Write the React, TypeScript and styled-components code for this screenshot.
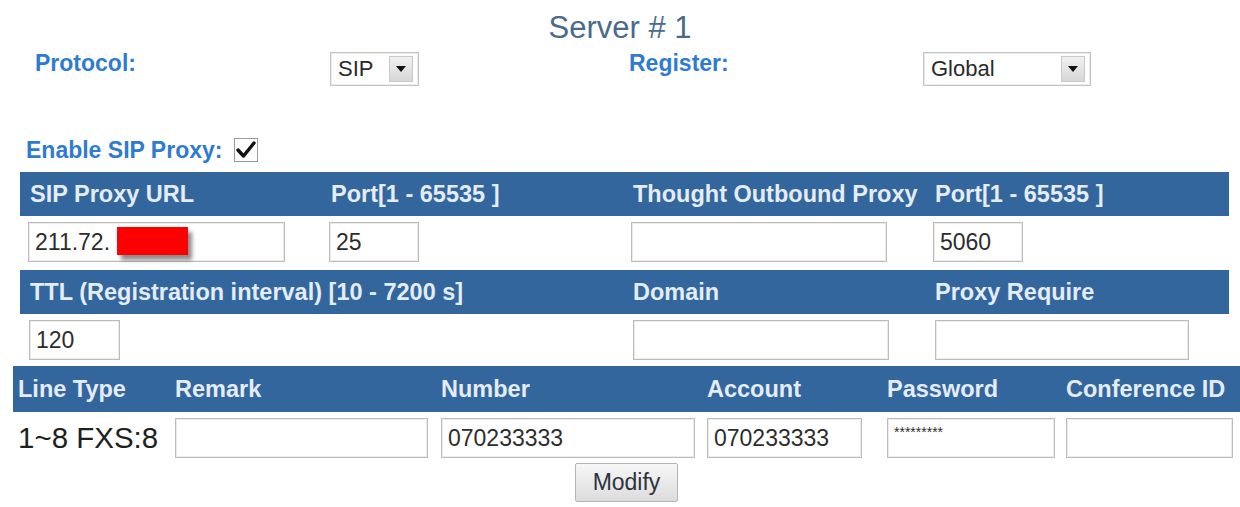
import React from "react";
import styled, { createGlobalStyle } from "styled-components";

const GlobalStyle = createGlobalStyle`
  body {
    margin: 0;
    background: #ffffff;
    font-family: "Liberation Sans", Arial, sans-serif;
  }
`;

const Page = styled.div`
  width: 1240px;
  height: 507px;
  overflow: hidden;
  position: relative;
`;

const Title = styled.h1`
  margin: 0;
  padding-top: 8px;
  height: 40px;
  line-height: 40px;
  text-align: center;
  font-size: 31px;
  font-weight: normal;
  color: #4a6a8c;
`;

const TopRow = styled.div`
  display: grid;
  grid-template-columns: 295px 299px 294px 1fr;
  padding: 4px 0 0 35px;
  height: 36px;
`;

const Label = styled.span`
  font-size: 23px;
  font-weight: bold;
  line-height: 22px;
  color: #2f7bd2;
`;

const SelectBox = styled.div<{ $w: number }>`
  width: ${(p) => p.$w}px;
  height: 34px;
  box-sizing: border-box;
  border: 1px solid #c4c4c4;
  box-shadow: inset 0 0 0 1px #ececec;
  display: flex;
  align-items: center;
  justify-content: space-between;
  padding: 0 5px 0 7px;
  font-size: 22px;
  color: #2a2a2a;
`;

const ArrowButton = styled.span`
  width: 24px;
  height: 26px;
  box-sizing: border-box;
  border: 1px solid #c9c9c9;
  background: linear-gradient(#f2f2f2, #d6d6d6);
  display: flex;
  align-items: center;
  justify-content: center;

  &::after {
    content: "";
    border-left: 5px solid transparent;
    border-right: 5px solid transparent;
    border-top: 6px solid #111;
  }
`;

const EnableRow = styled.div`
  display: flex;
  align-items: center;
  gap: 12px;
  margin-top: 49px;
  padding-left: 26px;
  height: 26px;
`;

const CheckBox = styled.span`
  width: 24px;
  height: 24px;
  box-sizing: border-box;
  border: 1px solid #9a9a9a;
  background: #fff;
  display: flex;
  align-items: center;
  justify-content: center;
`;

const Section = styled.div<{ $left: number }>`
  margin-left: ${(p) => p.$left}px;
`;

const ProxyBlock = styled(Section)`
  margin-top: 9px;
  width: 1209px;
`;

const HeaderBar = styled.div<{ $cols: string; $h: number }>`
  display: grid;
  grid-template-columns: ${(p) => p.$cols};
  align-items: center;
  height: ${(p) => p.$h}px;
  background: #33669c;
  color: #e4ecf5;
  font-size: 23.5px;
  font-weight: bold;
  white-space: nowrap;
`;

const FieldRow = styled.div<{ $cols: string; $pb: number }>`
  display: grid;
  grid-template-columns: ${(p) => p.$cols};
  align-items: center;
  padding: 6px 0 ${(p) => p.$pb}px;
  height: 40px;
`;

const Field = styled.div`
  position: relative;
`;

const TextInput = styled.input<{ $w: number; $small?: boolean }>`
  width: ${(p) => p.$w}px;
  height: 40px;
  box-sizing: border-box;
  margin: 0;
  padding: ${(p) => (p.$small ? "0 6px 12px" : "0 6px")};
  border: 1px solid #bcbcbc;
  box-shadow: inset 0 0 0 1px #ececec;
  outline: none;
  font-family: "Liberation Sans", Arial, sans-serif;
  font-size: ${(p) => (p.$small ? "14px" : "23px")};
  color: #2d2d2d;
  background: #fff;
`;

const Redaction = styled.span`
  position: absolute;
  left: 89px;
  top: 5px;
  width: 71px;
  height: 28px;
  background: #ff0000;
  box-shadow: 4px 5px 4px rgba(0, 0, 0, 0.45);
`;

const LineText = styled.span`
  font-size: 29.5px;
  color: #1f1f1f;
  white-space: nowrap;
`;

const ButtonRow = styled.div`
  display: flex;
  justify-content: center;
  padding-top: 5px;
`;

const ModifyButton = styled.button`
  width: 103px;
  height: 39px;
  border: 1px solid #b4b4b4;
  border-radius: 2px;
  background: linear-gradient(#f7f7f7, #dcdcdc);
  font-family: "Liberation Sans", Arial, sans-serif;
  font-size: 23px;
  color: #2e3340;
  padding: 0;
`;

const proxyCols = "301px 302px 302px 1fr";
const lineCols = "157px 266px 266px 180px 179px 1fr";

export default function App() {
  return (
    <Page>
      <GlobalStyle />
      <Title>Server # 1</Title>

      <TopRow>
        <Label>Protocol:</Label>
        <SelectBox $w={89}>
          SIP
          <ArrowButton />
        </SelectBox>
        <Label>Register:</Label>
        <SelectBox $w={168}>
          Global
          <ArrowButton />
        </SelectBox>
      </TopRow>

      <EnableRow>
        <Label>Enable SIP Proxy:</Label>
        <CheckBox>
          <svg width="22" height="20" viewBox="0 0 22 20">
            <path d="M3 10 L8.5 16 L19 3" fill="none" stroke="#111" strokeWidth="3.4" strokeLinecap="round" strokeLinejoin="round" />
          </svg>
        </CheckBox>
      </EnableRow>

      <ProxyBlock $left={20}>
        <HeaderBar $cols={proxyCols} $h={44} style={{ paddingLeft: 10 }}>
          <span>SIP Proxy URL</span>
          <span>Port[1 - 65535 ]</span>
          <span>Thought Outbound Proxy</span>
          <span>Port[1 - 65535 ]</span>
        </HeaderBar>
        <FieldRow $cols={proxyCols} $pb={8} style={{ paddingLeft: 8 }}>
          <Field>
            <TextInput $w={257} defaultValue="211.72." />
            <Redaction />
          </Field>
          <TextInput $w={90} defaultValue="25" />
          <TextInput $w={256} defaultValue="" />
          <TextInput $w={90} defaultValue="5060" />
        </FieldRow>

        <HeaderBar $cols="603px 302px 1fr" $h={44} style={{ paddingLeft: 10 }}>
          <span>TTL (Registration interval) [10 - 7200 s]</span>
          <span>Domain</span>
          <span>Proxy Require</span>
        </HeaderBar>
        <FieldRow $cols="604px 302px 1fr" $pb={6} style={{ paddingLeft: 9 }}>
          <TextInput $w={91} defaultValue="120" />
          <TextInput $w={256} defaultValue="" />
          <TextInput $w={254} defaultValue="" />
        </FieldRow>
      </ProxyBlock>

      <Section $left={13}>
        <HeaderBar $cols={lineCols} $h={46} style={{ paddingLeft: 5 }}>
          <span>Line Type</span>
          <span>Remark</span>
          <span>Number</span>
          <span>Account</span>
          <span>Password</span>
          <span>Conference ID</span>
        </HeaderBar>
        <FieldRow $cols={lineCols} $pb={0} style={{ paddingLeft: 5 }}>
          <LineText>1~8 FXS:8</LineText>
          <TextInput $w={253} defaultValue="" />
          <TextInput $w={254} defaultValue="070233333" />
          <TextInput $w={155} defaultValue="070233333" />
          <TextInput $w={168} $small defaultValue="*********" />
          <TextInput $w={167} defaultValue="" />
        </FieldRow>
        <ButtonRow>
          <ModifyButton>Modify</ModifyButton>
        </ButtonRow>
      </Section>
    </Page>
  );
}
